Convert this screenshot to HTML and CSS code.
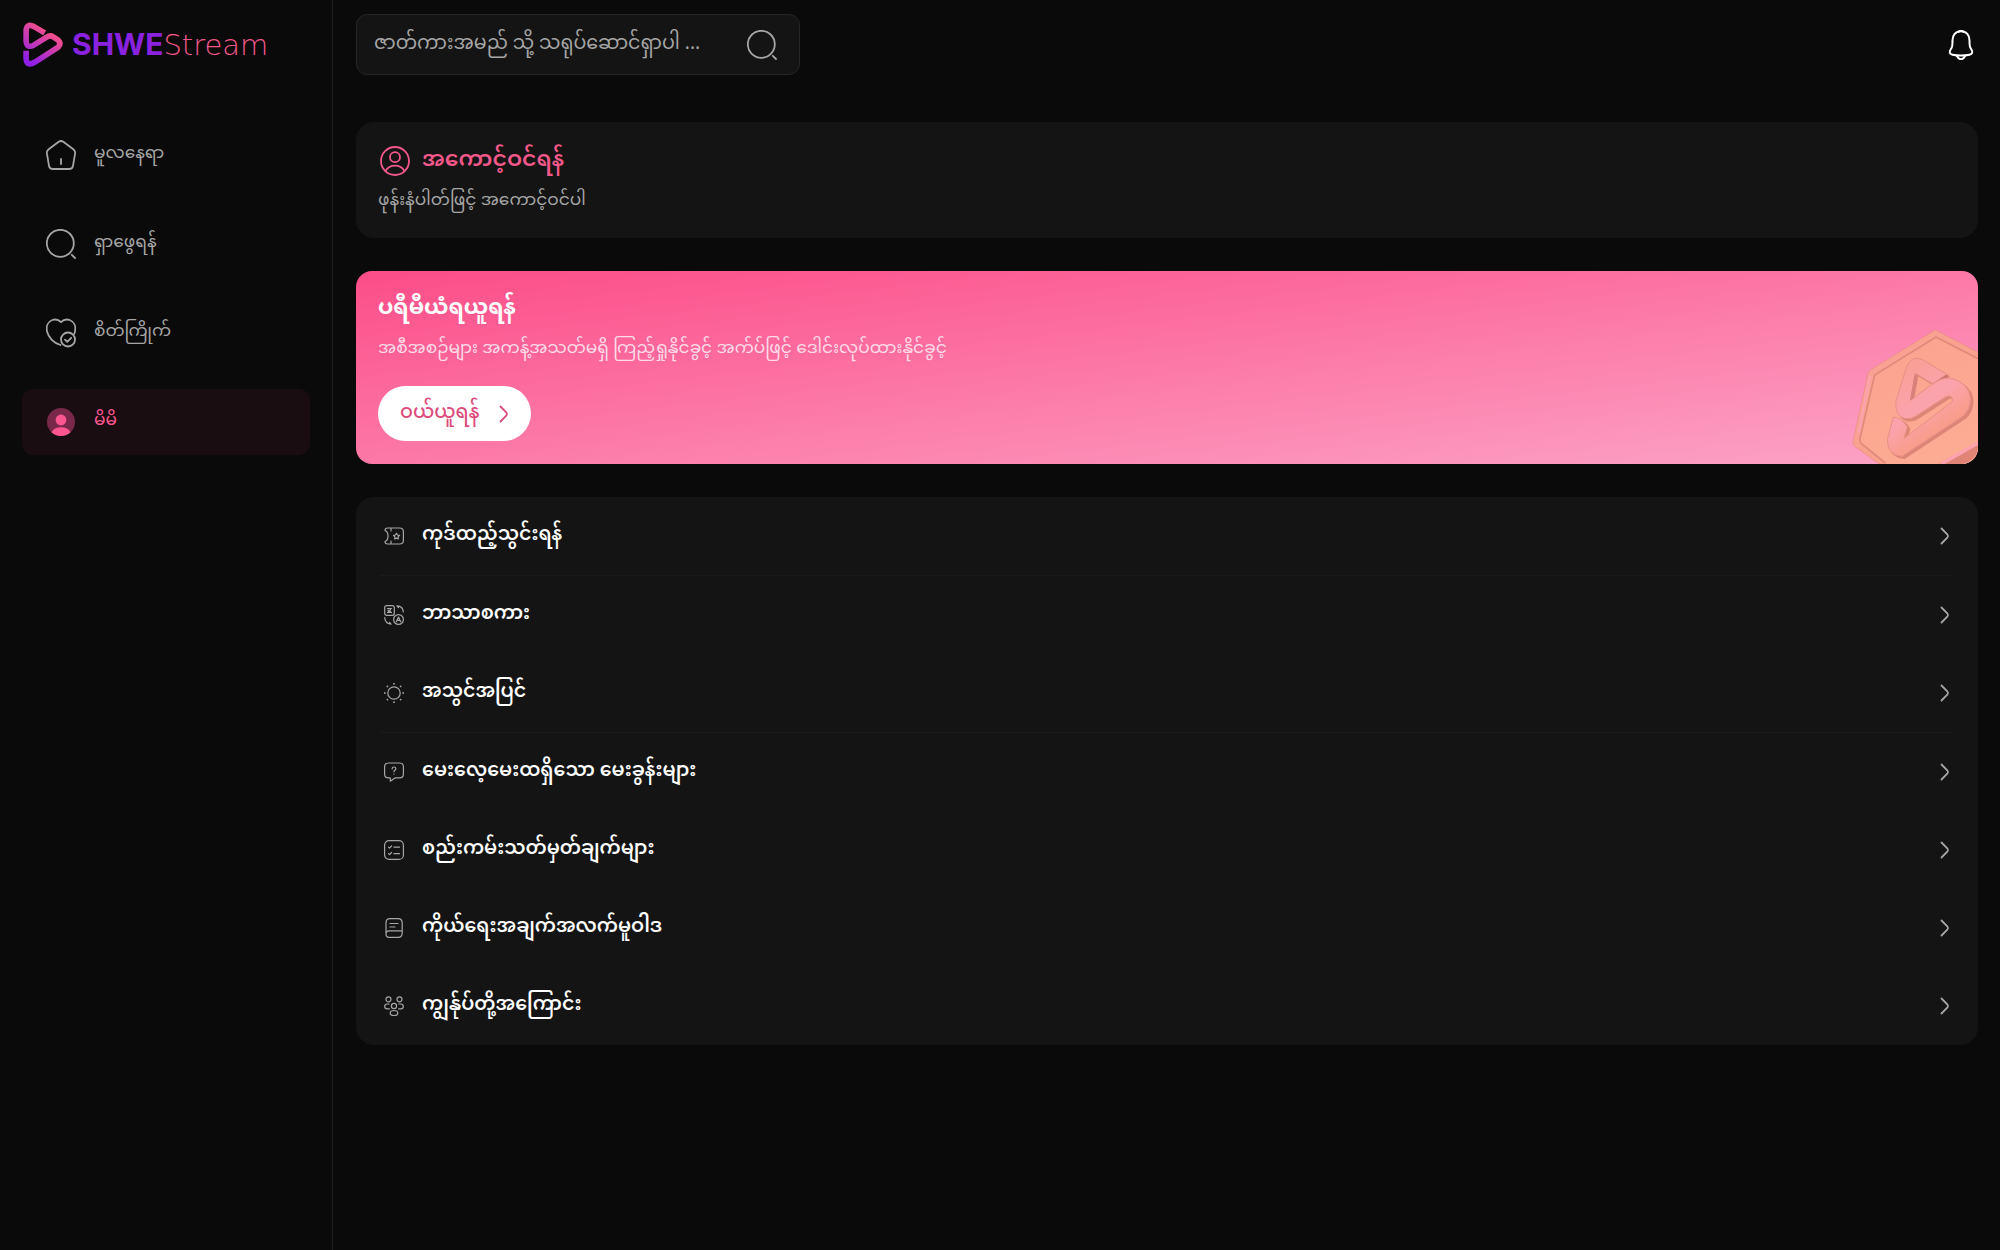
FILE: index.html
```html
<!DOCTYPE html>
<html lang="my">
  <head>
    <meta charset="UTF-8" />
    <meta name="viewport" content="width=device-width, initial-scale=1.0" />
    <title>SHWEStream</title>
    <link rel="stylesheet" href="styles.css">
  </head>
  <body>
    <svg class="defs" width="0" height="0" aria-hidden="true">
      <symbol id="search" viewBox="0 0 30 30">
        <circle cx="14.3" cy="14.3" r="13.5" />
        <path d="M25.8 25.8l3.2 3.2" />
      </symbol>
      <symbol id="chevron" viewBox="0 0 10 18">
        <path d="M1.5 1.5l6 6.2q1 1.3 0 2.6l-6 6.2" />
      </symbol>
    </svg>

    <aside class="sidebar">
      <a class="logo" href="#">
        <svg class="logo-mark" viewBox="64 66 126 136" fill="none">
          <defs>
            <linearGradient id="mark" x1="0.8" y1="0" x2="0.2" y2="1">
              <stop offset="0.15" stop-color="#f6508a" />
              <stop offset="1" stop-color="#8f1fe6" />
            </linearGradient>
          </defs>
          <path d="M132 99L100 80Q76 68 76 94V122Q77 147 99 136L138 112Q148 105 158 111L173 121Q183 131 173 142L103 187Q77 202 76 176V153" stroke="url(#mark)" stroke-width="17" />
        </svg>
        <span class="logo-text"><b>SHWE</b><span>Stream</span></span>
      </a>
      <nav class="nav">
        <a class="nav-item" href="#">
          <svg class="icon" viewBox="0 0 30 30">
            <path d="M12.7 1.8Q15 .2 17.3 1.8L27.3 9.2Q29.4 10.9 29.1 13.4L27 25.8Q26.4 29 23.2 29H6.8Q3.6 29 3 25.8L.9 13.4Q.6 10.9 2.7 9.2ZM15 19v5" />
          </svg>
          <span>မူလနေရာ</span>
        </a>
        <a class="nav-item" href="#">
          <svg class="icon"><use href="#search" /></svg>
          <span>ရှာဖွေရန်</span>
        </a>
        <a class="nav-item" href="#">
          <svg class="icon" viewBox="0 0 30 30">
            <path d="M15 4.2C17.5 1.6 20.6.9 23.7 2 28 3.600 30 8.300 29 13.400Q28.700 14.700 28.200 16M15 4.200C12.500 1.600 9.400.9 6.300 2 2 3.600 0 8.300 1 13.400 2.300 19.500 8 25.300 14.500 27" />
            <circle cx="22" cy="21.500" r="7" />
            <path d="M19 21.600l2.200 2.200 4-4" />
          </svg>
          <span>စိတ်ကြိုက်</span>
        </a>
        <a class="nav-item active" href="#">
          <svg class="icon avatar" viewBox="0 0 30 30">
            <circle cx="15" cy="15" r="14" fill="#7a2849" />
            <circle cx="15" cy="13" r="5.400" fill="#fd5590" />
            <path d="M5.500 25.200Q8 20.300 15 20.300T24.500 25.200Q20.500 29 15 29T5.500 25.200Z" fill="#fd5590" />
          </svg>
          <span>မိမိ</span>
        </a>
      </nav>
    </aside>

    <div class="page">
      <header class="topbar">
        <form class="search">
          <input type="text" aria-label="ရှာဖွေရန်" placeholder="ဇာတ်ကားအမည် သို့ သရုပ်ဆောင်ရှာပါ ..." />
          <button type="button" class="icon-btn" aria-label="ရှာဖွေရန်">
            <svg class="icon"><use href="#search" /></svg>
          </button>
        </form>
        <button type="button" class="icon-btn bell" aria-label="အသိပေးချက်">
          <svg class="icon" viewBox="0 0 30 30">
            <path d="M15 1.200C9.500 1.200 6.500 5.300 6.500 10.200 6.500 16.500 6.200 17.200 4.500 19.700 2.800 22.300 3.800 24.100 6.500 24.700 12 25.800 18 25.800 23.500 24.700 26.200 24.100 27.200 22.300 25.500 19.700 23.800 17.200 23.500 16.500 23.500 10.200 23.500 5.300 20.500 1.200 15 1.200Z" />
            <path d="M12.500 1.800Q15-.200 17.500 1.800M11 26Q12.500 29.200 15 29.200T19 26" />
          </svg>
        </button>
      </header>

      <main class="content">
        <a class="card login" href="#">
          <span class="login-title">
            <svg class="icon" viewBox="0 0 30 30">
              <circle cx="15" cy="15" r="14" />
              <circle cx="15" cy="11.200" r="5" />
              <path d="M5.500 25Q8.500 19.700 15 19.700T24.500 25" />
            </svg>
            <span>အကောင့်ဝင်ရန်</span>
          </span>
          <span class="login-text">ဖုန်းနံပါတ်ဖြင့် အကောင့်ဝင်ပါ</span>
        </a>

        <section class="banner">
          <h2>ပရီမီယံရယူရန်</h2>
          <p>အစီအစဉ်များ အကန့်အသတ်မရှိ ကြည့်ရှုနိုင်ခွင့် အက်ပ်ဖြင့် ဒေါင်းလုပ်ထားနိုင်ခွင့်</p>
          <button type="button" class="buy">
            <span>ဝယ်ယူရန်</span>
            <svg class="chevron"><use href="#chevron" /></svg>
          </button>
          <svg class="coin" viewBox="216 87 378 402">
            <defs>
              <linearGradient id="rim" x1="0" y1="0" x2="1" y2="1">
                <stop offset="0" stop-color="#faa196" />
                <stop offset="1" stop-color="#f9a284" />
              </linearGradient>
              <linearGradient id="face" x1="0" y1="0" x2="0.5" y2="1">
                <stop offset="0" stop-color="#fba28e" />
                <stop offset="1" stop-color="#fdac94" />
              </linearGradient>
              <linearGradient id="ridge" x1="0.2" y1="0" x2="0.8" y2="1">
                <stop offset="0" stop-color="#f99e92" />
                <stop offset="0.45" stop-color="#fba3ae" />
                <stop offset="0.75" stop-color="#f99c88" />
              </linearGradient>
              <path id="coin-s" d="M500 220L430 177Q396 160 380 196L348 300Q342 344 376 353Q394 356 410 344L500 286Q520 282 517 302L372 412L382 378Q368 352 340 348L322 415Q322 464 366 466L550 345Q582 312 566 270Q546 236 506 231Q484 231 455 250L392 298L406 217L458 248Z" />
            </defs>
            <path d="M464 88Q470 88 476 92L720 220 640 520 480 600 298 489 224 436Q217 430 219 420L264 218Q267 208 276 204Z" fill="url(#rim)" stroke="#e98b84" stroke-width="2" />
            <path d="M468 110L700 230 600 420 470 489H316L242 426Q238 418 241 408L284 224Z" fill="url(#face)" />
            <path d="M594 173L468 108 284 222 241 408Q238 418 242 426L316 486" fill="none" stroke="#e08a7b" stroke-width="5" />
            <path d="M270 224L236 395" fill="none" stroke="#fba3b0" stroke-width="7" />
            <path d="M594 424L480 489H545Q590 478 594 440Z" fill="#df8476" />
            <path d="M594 426L484 489" stroke="#fda3b0" stroke-width="10" />
            <use href="#coin-s" x="7" y="6" fill="#dd8577" stroke="#dd8577" stroke-width="4" stroke-linejoin="round" />
            <use href="#coin-s" fill="url(#ridge)" stroke="#e69086" stroke-width="3" stroke-linejoin="round" />
            <path d="M404 218L390 298L400 292L412 238Z" fill="#d9807c" />
            <path d="M460 246L500 221L504 229Q480 230 458 248Z" fill="#cc7369" />
          </svg>
        </section>

        <ul class="card menu">
          <li>
            <a href="#">
              <svg class="icon small" viewBox="0 0 20 20">
                <path d="M1 4.500Q1 2 3.500 2H15.500Q19.400 2 19.400 5.800V14.200Q19.400 18 15.500 18H3.500Q1 18 1 15.500C2.500 15 4 12.600 4 10S2.500 5 1 4.500ZM7 2V5M7 15V18" />
                <path d="M12.500 7.300l1 1.700 2 .4-1.400 1.500.2 2-1.800-.8-1.800.8.200-2-1.400-1.500 2-.4Z" />
              </svg>
              <span>ကုဒ်ထည့်သွင်းရန်</span>
              <svg class="chevron"><use href="#chevron" /></svg>
            </a>
          </li>
          <li class="divided">
            <a href="#">
              <svg class="icon small" viewBox="0 0 20 20">
                <rect x=".7" y=".7" width="9.600" height="9.600" rx="2" />
                <path d="M3.500 3.500H7.500M4 7.500H7.500M7 3.500Q6 6 3.500 7.500M4 5L7.500 7.500" />
                <circle cx="14.500" cy="14.500" r="4.900" />
                <path d="M12.300 16.800L14.500 12 16.700 16.800M13.200 15.400H15.800M13 .8Q19 1 19.300 7M13 .8L14.500 2.500M.7 12.500Q1 18.500 7 19.200M7 19.200L5.500 17.500" />
              </svg>
              <span>ဘာသာစကား</span>
              <svg class="chevron"><use href="#chevron" /></svg>
            </a>
          </li>
          <li>
            <a href="#">
              <svg class="icon small" viewBox="0 0 20 20">
                <circle cx="10" cy="10" r="6.200" />
                <path class="dots" d="M10 .8v.01M10 19.200v.01M.8 10h.01M19.200 10h.01M3.400 3.400h.01M16.600 3.400h.01M3.400 16.600h.01M16.600 16.600h.01" />
              </svg>
              <span>အသွင်အပြင်</span>
              <svg class="chevron"><use href="#chevron" /></svg>
            </a>
          </li>
          <li class="divided">
            <a href="#">
              <svg class="icon small" viewBox="0 0 20 20">
                <path d="M4.500 1H15.500Q19.400 1 19.400 4.800V12Q19.400 15.900 15.500 15.900H11L6.300 19.200V15.900H4.500Q.6 15.900.6 12V4.800Q.6 1 4.500 1Z" />
                <path d="M8.100 6.900Q8.200 5 10 5T11.900 6.800Q11.800 7.800 10.800 8.300 10 8.800 10 9.800M10 12v.2" />
              </svg>
              <span>မေးလေ့မေးထရှိသော မေးခွန်းများ</span>
              <svg class="chevron"><use href="#chevron" /></svg>
            </a>
          </li>
          <li>
            <a href="#">
              <svg class="icon small" viewBox="0 0 20 20">
                <rect x=".6" y=".6" width="18.800" height="18.800" rx="4.500" />
                <path d="M4.500 7.200l1 1L7.600 6M10 7.200H15.500M4.500 13.700l1 1 2.100-2.200M10 13.700H15.500" />
              </svg>
              <span>စည်းကမ်းသတ်မှတ်ချက်များ</span>
              <svg class="chevron"><use href="#chevron" /></svg>
            </a>
          </li>
          <li>
            <a href="#">
              <svg class="icon small" viewBox="0 0 20 20">
                <path d="M2 5Q2 .6 6 .6H14Q18.200 .6 18.200 5V15Q18.200 19.400 14 19.400H5Q2 19.400 2 16ZM2 16Q2 12.800 5 12.800H18.200M6 5.500H14M6 9H11" />
              </svg>
              <span>ကိုယ်ရေးအချက်အလက်မူဝါဒ</span>
              <svg class="chevron"><use href="#chevron" /></svg>
            </a>
          </li>
          <li>
            <a href="#">
              <svg class="icon small" viewBox="0 0 20 20">
                <circle cx="4.500" cy="3.300" r="2.500" />
                <circle cx="15.500" cy="3.300" r="2.500" />
                <circle cx="10" cy="10" r="2.600" />
                <ellipse cx="10" cy="17" rx="3.800" ry="2.500" />
                <path d="M5.200 8H3.200Q.7 8.200.7 10.400T3.200 12.900H5.400M14.800 8H16.800Q19.300 8.200 19.300 10.400T16.800 12.900H14.600" />
              </svg>
              <span>ကျွန်ုပ်တို့အကြောင်း</span>
              <svg class="chevron"><use href="#chevron" /></svg>
            </a>
          </li>
        </ul>
      </main>
    </div>
  </body>
</html>
```
FILE: styles.css
```css
* {
  box-sizing: border-box;
}
body {
  margin: 0;
  min-height: 100vh;
  display: flex;
  background-color: #0a0a0a;
  color: #fff;
  font-family: "Noto Sans Myanmar", "Noto Sans", sans-serif;
  font-size: 19px;
}
a {
  color: inherit;
  text-decoration: none;
}
button {
  font-family: inherit;
  border: none;
  cursor: pointer;
}
.defs {
  position: absolute;
}
.sidebar {
  width: 333px;
  flex-shrink: 0;
  padding: 22px;
  border-right: 1px solid #1f1f1f;
}
.logo {
  display: flex;
  align-items: center;
  gap: 8px;
  height: 45px;
}
.logo-mark {
  width: 42px;
  height: 45px;
}
.logo-text {
  font-family: "DejaVu Sans", sans-serif;
  font-size: 29px;
  line-height: 45px;
  font-weight: 200;
  color: #f4588b;
}
.logo-text b {
  font-family: Inter, sans-serif;
  font-size: 30px;
  font-weight: 700;
  color: #8a22e0;
}
.nav {
  display: flex;
  flex-direction: column;
  gap: 23px;
  margin-top: 55px;
}
.nav-item {
  display: flex;
  align-items: center;
  gap: 18px;
  height: 66px;
  padding: 0 24px;
  border-radius: 11px;
  font-size: 17px;
  line-height: 30px;
  color: #a6a6a6;
}
.nav-item span {
  padding-bottom: 2px;
}
.nav-item.active {
  background-color: #190d11;
  color: #fd5590;
}
.icon {
  width: 30px;
  height: 30px;
  flex-shrink: 0;
  fill: none;
  stroke: currentColor;
  stroke-width: 1.8;
  stroke-linecap: round;
  stroke-linejoin: round;
}
.icon.small {
  width: 20px;
  height: 20px;
  stroke-width: 1.2;
  color: #a6a6a6;
}
.dots {
  stroke-width: 1.8;
}
.avatar {
  stroke: none;
}
.chevron {
  width: 10px;
  height: 18px;
  flex-shrink: 0;
  fill: none;
  stroke: currentColor;
  stroke-width: 1.8;
  stroke-linecap: round;
}
.page {
  flex: 1;
  min-width: 0;
  padding: 14px 22px 14px 23px;
}
.topbar {
  display: flex;
  justify-content: space-between;
  align-items: center;
}
.search {
  display: flex;
  align-items: center;
  width: 444px;
  height: 61px;
  padding: 0 22px 0 17px;
  background-color: #141414;
  border: 1px solid #262626;
  border-radius: 11px;
}
.search input {
  flex: 1;
  min-width: 0;
  height: 56px;
  padding: 0;
  background: none;
  border: none;
  outline: none;
  color: #fff;
  font-family: inherit;
  font-size: 19px;
}
.search input::placeholder {
  color: #a6a6a6;
  opacity: 1;
}
.icon-btn {
  display: flex;
  padding: 0;
  background: none;
  color: #a6a6a6;
}
.bell {
  padding: 0 2px;
  color: #fff;
}
.bell .icon {
  stroke-width: 2;
}
.content {
  display: flex;
  flex-direction: column;
  gap: 33px;
  margin-top: 47px;
}
.card {
  background-color: #141414;
  border-radius: 18px;
}
.login {
  display: flex;
  flex-direction: column;
  gap: 8px;
  height: 116px;
  padding: 22px;
}
.login-title {
  display: flex;
  align-items: center;
  gap: 12px;
  padding-left: 2px;
  font-size: 22px;
  line-height: 34px;
  font-weight: 600;
  color: #f4588b;
}
.login-text {
  font-size: 17px;
  line-height: 30px;
  color: #a6a6a6;
}
.banner {
  position: relative;
  height: 193px;
  padding: 21px 22px;
  overflow: hidden;
  border-radius: 16px;
  background: linear-gradient(to bottom right, #fc4d88, #fca4c6);
}
.banner h2 {
  margin: 0;
  font-size: 22px;
  line-height: 34px;
  font-weight: 700;
}
.banner p {
  margin: 8px 0 22px;
  font-size: 17px;
  line-height: 30px;
  color: #ffdbe7;
}
.buy {
  display: flex;
  align-items: center;
  gap: 20px;
  height: 55px;
  padding: 0 22px;
  border-radius: 28px;
  background-color: #fff;
  color: #dd4a7c;
  font-size: 19px;
  font-weight: 500;
}
.coin {
  position: absolute;
  right: 0;
  bottom: 0;
  width: 126px;
  height: 134px;
}
.menu {
  margin: 0;
  padding: 0 24px;
  list-style: none;
}
.menu .divided {
  border-top: 1px solid #1a1a1a;
}
.menu a {
  display: flex;
  align-items: center;
  gap: 18px;
  height: 78px;
  padding: 0 4px;
  font-size: 19px;
  font-weight: 600;
}
.menu a span {
  flex: 1;
  padding-bottom: 2px;
}
.menu .chevron {
  color: #a6a6a6;
}
```
